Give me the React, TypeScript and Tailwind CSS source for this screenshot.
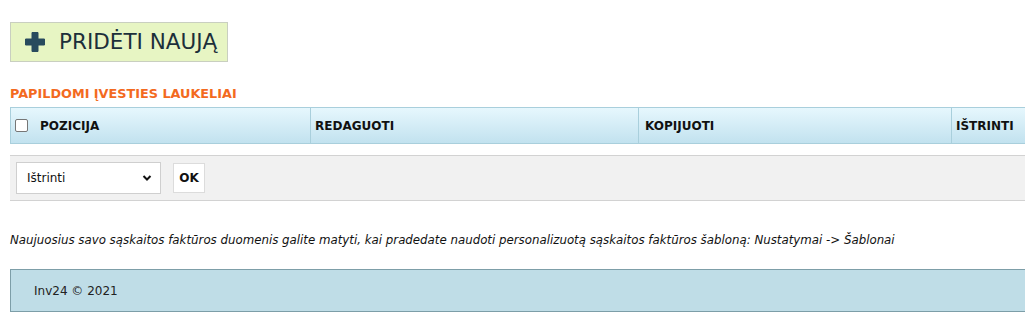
import React from "react";

export default function App() {
  return (
    <div className="w-full h-[327px] overflow-hidden bg-white" style={{ fontFamily: '"DejaVu Sans", Verdana, sans-serif' }}>
      <div className="w-[1060px] pl-[10px]">
        <div className="pt-[22px]">
          <button className="flex items-center h-[40px] w-[218px] bg-[#e7f5c3] border border-[#c9cfc0] pl-[13px]">
            <svg width="22" height="22" viewBox="0 0 22 22" className="mr-[13px]">
              <path d="M8 1.5h6v6.5h6.5v6H14v6.5H8V14H1.5V8H8z" fill="#284b5e" strokeLinejoin="round" stroke="#284b5e" strokeWidth="1" />
            </svg>
            <span className="text-[21.5px] text-[#1c2f3a]">PRIDĖTI NAUJĄ</span>
          </button>
        </div>
        <div className="mt-[25px] text-[12.8px] font-bold text-[#f36a1f] leading-[14px]">PAPILDOMI ĮVESTIES LAUKELIAI</div>
        <div className="mt-[6px] flex h-[37px] border border-[#a9cfdc] bg-gradient-to-b from-[#e6f7fd] to-[#c2e2ef] text-[12px] font-bold text-[#111]">
          <div className="w-[300px] flex items-center border-r border-[#a9cfdc]">
            <span className="ml-[4px] w-[13px] h-[13px] rounded-[2px] border border-[#767676] bg-white" />
            <span className="ml-[12px]">POZICIJA</span>
          </div>
          <div className="w-[328px] flex items-center border-r border-[#a9cfdc] pl-[4px]">REDAGUOTI</div>
          <div className="w-[313px] flex items-center border-r border-[#a9cfdc] pl-[6px]">KOPIJUOTI</div>
          <div className="flex-1 flex items-center pl-[4px]">IŠTRINTI</div>
        </div>
        <div className="mt-[11px] h-[46px] bg-[#f1f1f1] border-y border-[#d2d2d2] flex items-center pl-[6px]">
          <div className="w-[145px] h-[32px] bg-white border border-[#cfcfcf] flex items-center justify-between pl-[10px] pr-[8px] text-[12px] text-[#111]">
            <span>Ištrinti</span>
            <svg width="10" height="8" viewBox="0 0 10 8">
              <path d="M1.5 2l3.5 3.5L8.5 2" fill="none" stroke="#111" strokeWidth="2" />
            </svg>
          </div>
          <div className="ml-[12px] w-[32px] h-[30px] bg-white border border-[#dcdcdc] flex items-center justify-center text-[12px] font-bold text-[#111]">OK</div>
        </div>
        <div className="mt-[32px] text-[11.8px] italic text-[#111] leading-[14px]">
          Naujuosius savo sąskaitos faktūros duomenis galite matyti, kai pradedate naudoti personalizuotą sąskaitos faktūros šabloną: Nustatymai -&gt; Šablonai
        </div>
        <div className="mt-[22px] h-[43px] bg-[#bfdde7] border border-[#7d9ea8] flex items-center pl-[23px] text-[12px] text-[#222]">
          Inv24 © 2021
        </div>
      </div>
    </div>
  );
}
